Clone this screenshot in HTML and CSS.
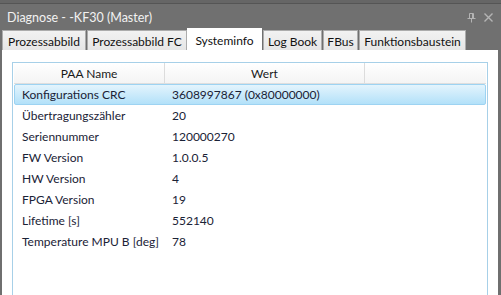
FILE: index.html
```html
<!DOCTYPE html>
<html>
<head>
<meta charset="utf-8">
<link rel="stylesheet" href="styles.css">
</head>
<body>
<div class="window">
  <div class="titlebar">
    <span class="title">Diagnose - -KF30 (Master)</span>
    <span class="tools">
      <svg class="pin" width="9" height="10" viewBox="0 0 9 10"><path d="M2.5 0.5h4v5h-4z M0.5 5.5h8 M4.5 5.5v4" fill="none" stroke="#b4b4b4" stroke-width="1"/><path d="M5 1v4h1v-4z" fill="#b4b4b4"/></svg>
      <svg class="close" width="9" height="9" viewBox="0 0 9 9"><path d="M0.5 0.5l8 8M8.5 0.5l-8 8" stroke="#b4b4b4" stroke-width="1.4"/></svg>
    </span>
  </div>
  <div class="tabs">
    <div class="tab t1">Prozessabbild</div>
    <div class="tab t2">Prozessabbild FC</div>
    <div class="tab t3 active">Systeminfo</div>
    <div class="tab t4">Log Book</div>
    <div class="tab t5">FBus</div>
    <div class="tab t6">Funktionsbaustein</div>
  </div>
  <div class="content">
    <div class="list">
      <div class="header">
        <div class="hcol c1">PAA Name</div>
        <div class="hcol c2">Wert</div>
        <div class="hcol c3"></div>
      </div>
      <div class="row selected"><div class="name">Konfigurations CRC</div><div class="val">3608997867 (0x80000000)</div></div>
      <div class="row"><div class="name">Übertragungszähler</div><div class="val">20</div></div>
      <div class="row"><div class="name">Seriennummer</div><div class="val">120000270</div></div>
      <div class="row"><div class="name">FW Version</div><div class="val">1.0.0.5</div></div>
      <div class="row"><div class="name">HW Version</div><div class="val">4</div></div>
      <div class="row"><div class="name">FPGA Version</div><div class="val">19</div></div>
      <div class="row"><div class="name">Lifetime [s]</div><div class="val">552140</div></div>
      <div class="row"><div class="name">Temperature MPU B [deg]</div><div class="val">78</div></div>
    </div>
  </div>
</div>
</body>
</html>
```
FILE: styles.css
```css
* { box-sizing: border-box; }
html, body { margin: 0; padding: 0; }
body {
  width: 501px;
  height: 295px;
  overflow: hidden;
  font-family: Lato, "Open Sans", sans-serif;
  font-size: 12px;
  background: #6f6f6f;
}
.window {
  width: 501px;
  height: 295px;
  display: flex;
  flex-direction: column;
  border-top: 3px solid #666;
}
.titlebar {
  height: 27px;
  flex: none;
  background: #707070;
  border-top: 1px solid #555;
  display: flex;
  align-items: center;
  justify-content: space-between;
  padding: 0 8px 0 7px;
  color: #f2f2f2;
  font-size: 12.5px;
}
.tools { display: flex; align-items: center; gap: 8px; padding-top: 1px; }
.tabs {
  height: 20px;
  flex: none;
  display: flex;
  align-items: flex-end;
  padding-left: 2px;
  background: #707070;
  position: relative;
  z-index: 1;
}
.tab {
  height: 20px;
  background: linear-gradient(#f2f2f2, #e6e6e6);
  border: 1px solid #acacac;
  border-bottom: none;
  margin-right: 1px;
  color: #111;
  display: flex;
  align-items: center;
  justify-content: center;
  padding-top: 1px;
  white-space: nowrap;
}
.t1 { width: 84px; }
.t2 { width: 100px; }
.t3 { width: 73px; }
.t4 { width: 59px; }
.t5 { width: 35px; }
.t6 { width: 107px; }
.tab.active {
  height: 23px;
  background: #fff;
  border-color: #fff;
  margin-bottom: -1px;
  margin-left: -1px;
  margin-right: 1px;
  width: 75px;
  padding-top: 0;
}
.content {
  flex: 1;
  background: #fff;
  margin-left: 2px;
  margin-right: 3px;
  padding: 12px 10px 0 10px;
  display: flex;
  flex-direction: column;
}
.list {
  flex: 1;
  border: 1px solid #a7d0e8;
  border-bottom: none;
  padding: 0 1px;
  color: #1a2236;
}
.header {
  height: 21px;
  display: flex;
  background: linear-gradient(#ffffff, #f4f4f4);
  border-bottom: 1px solid #dedede;
}
.hcol {
  display: flex;
  align-items: center;
  justify-content: center;
  border-right: 1px solid #dcdcdc;
  color: #1a1a1a;
}
.c1 { width: 151px; }
.c2 { width: 200px; }
.c3 { flex: 1; border-right: none; }
.row {
  height: 21px;
  display: flex;
  align-items: center;
  border: 1px solid transparent;
}
.row.selected {
  background: linear-gradient(#e3f4fd, #b3e1f9);
  border-color: #9dd3f2;
  border-radius: 2px;
}
.name { width: 151px; padding-left: 7px; white-space: nowrap; }
.val { padding-left: 6px; white-space: nowrap; }
```
